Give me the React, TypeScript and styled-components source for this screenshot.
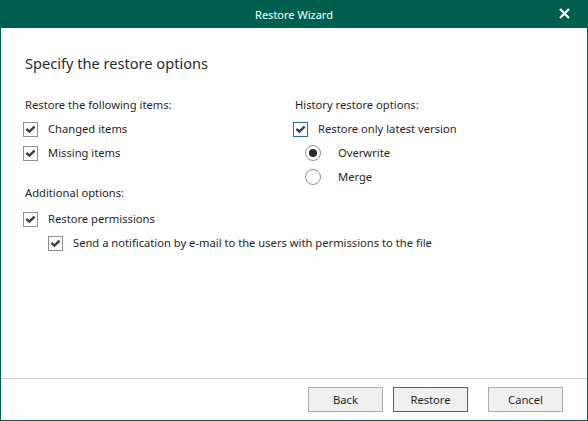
import React from "react";
import styled, { createGlobalStyle } from "styled-components";

const Global = createGlobalStyle`
  html, body { margin: 0; padding: 0; height: 100%; background: #fff; }
  #root { height: 100%; }
  * { box-sizing: border-box; }
`;

const Window = styled.div`
  width: 588px;
  height: 421px;
  display: flex;
  flex-direction: column;
  border: 1px solid #00604d;
  border-top: none;
  font-family: "Noto Sans", "Open Sans", sans-serif;
  font-size: 11.2px;
  color: #1f1f1f;
  background: #fff;
`;

const TitleBar = styled.div`
  height: 28px;
  margin: 0 -1px;
  background: #00604d;
  color: #fff;
  display: flex;
  align-items: center;
  position: relative;
  font-size: 11px;
`;

const Title = styled.div`
  flex: 1;
  text-align: center;
`;

const CloseBtn = styled.div`
  position: absolute;
  right: 18px;
  top: 7px;
  width: 12px;
  height: 12px;
  display: flex;
  align-items: center;
  justify-content: center;
`;

const Content = styled.div`
  flex: 1;
  padding: 24px 0 0 22px;
`;

const Heading = styled.div`
  font-size: 14.6px;
  color: #2a2a2a;
  margin: 0 0 0 2px;
  line-height: 22px;
`;

const Columns = styled.div`
  display: grid;
  grid-template-columns: 270px 1fr;
  margin-top: 23px;
`;

const Column = styled.div`
  display: flex;
  flex-direction: column;
`;

const GroupLabel = styled.div<{ $top?: number; $bottom?: number }>`
  line-height: 16px;
  height: 16px;
  margin: ${(p) => p.$top ?? 0}px 0 ${(p) => p.$bottom ?? 4}px 2px;
`;

const Row = styled.div<{ $indent?: number }>`
  display: flex;
  align-items: center;
  height: 24px;
  padding-left: ${(p) => p.$indent ?? 0}px;
`;

const Box = styled.div<{ $focused?: boolean }>`
  width: 15px;
  height: 15px;
  border: 1px solid ${(p) => (p.$focused ? "#1b6cb0" : "#8f8f8f")};
  background: #fff;
  display: flex;
  align-items: center;
  justify-content: center;
  margin-right: 10px;
  flex: none;
`;

const Radio = styled.div<{ $checked?: boolean }>`
  width: 16px;
  height: 16px;
  border-radius: 50%;
  border: 1px solid #8f8f8f;
  background: #fff;
  display: flex;
  align-items: center;
  justify-content: center;
  margin-right: 17px;
  flex: none;
  &::after {
    content: "";
    display: ${(p) => (p.$checked ? "block" : "none")};
    width: 8px;
    height: 8px;
    border-radius: 50%;
    background: #2b2b2b;
  }
`;

const Label = styled.span`
  line-height: 16px;
  white-space: nowrap;
`;

const Footer = styled.div`
  height: 42px;
  border-top: 1px solid #cccccc;
  display: flex;
  align-items: flex-start;
  padding: 8px 0 0 307px;
`;

const Button = styled.div<{ $primary?: boolean; $gap?: number }>`
  width: 75px;
  height: 25px;
  margin-right: ${(p) => p.$gap ?? 0}px;
  background: #f0f0f0;
  border: 1px solid ${(p) => (p.$primary ? "#1b6cb0" : "#adadad")};
  display: flex;
  align-items: center;
  justify-content: center;
  font-size: 11.2px;
  color: #1f1f1f;
`;

const Check = () => (
  <svg width="11" height="9" viewBox="0 0 11 9">
    <path d="M1.4 3.8 L4.4 6.6 L9.6 1.6" fill="none" stroke="#3d3d3d" strokeWidth="2.5" />
  </svg>
);

const CheckRow = ({
  label,
  focused,
  indent,
}: {
  label: string;
  focused?: boolean;
  indent?: number;
}) => (
  <Row $indent={indent}>
    <Box $focused={focused}>
      <Check />
    </Box>
    <Label>{label}</Label>
  </Row>
);

const RadioRow = ({ label, checked, indent }: { label: string; checked?: boolean; indent?: number }) => (
  <Row $indent={indent}>
    <Radio $checked={checked} />
    <Label>{label}</Label>
  </Row>
);

export default function App() {
  return (
    <>
      <Global />
      <Window>
        <TitleBar>
          <Title>Restore Wizard</Title>
          <CloseBtn>
            <svg width="11" height="11" viewBox="0 0 11 11">
              <path d="M1 1 L10 10 M10 1 L1 10" stroke="#fff" strokeWidth="2.2" />
            </svg>
          </CloseBtn>
        </TitleBar>
        <Content>
          <Heading>Specify the restore options</Heading>
          <Columns>
            <Column>
              <GroupLabel>Restore the following items:</GroupLabel>
              <CheckRow label="Changed items" />
              <CheckRow label="Missing items" />
            </Column>
            <Column>
              <GroupLabel>History restore options:</GroupLabel>
              <CheckRow label="Restore only latest version" focused />
              <RadioRow label="Overwrite" checked indent={12} />
              <RadioRow label="Merge" indent={12} />
            </Column>
          </Columns>
          <Column>
            <GroupLabel $top={-4} $bottom={6}>Additional options:</GroupLabel>
            <CheckRow label="Restore permissions" />
            <CheckRow label="Send a notification by e-mail to the users with permissions to the file" indent={25} />
          </Column>
        </Content>
        <Footer>
          <Button $gap={10}>Back</Button>
          <Button $primary $gap={20}>Restore</Button>
          <Button>Cancel</Button>
        </Footer>
      </Window>
    </>
  );
}
